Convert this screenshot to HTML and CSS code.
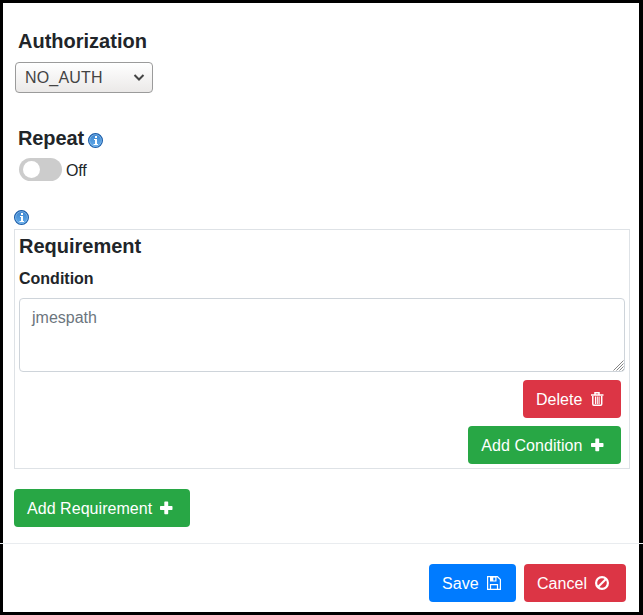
FILE: index.html
```html
<!DOCTYPE html>
<html lang="en">
<head>
<meta charset="utf-8">
<title>Request settings</title>
<link rel="stylesheet" href="styles.css">
</head>
<body>
<svg class="defs" aria-hidden="true">
  <defs>
    <linearGradient id="blue" x1="0" y1="0" x2="0" y2="1"><stop offset="0" stop-color="#3b82cc"/><stop offset="1" stop-color="#62adec"/></linearGradient>
    <symbol id="info" viewBox="0 0 15 15">
      <circle cx="7.500" cy="7.500" r="6.900" fill="url(#blue)" stroke="#1e5faa" stroke-width="1.200"/>
      <circle cx="7.500" cy="7.500" r="5.900" fill="none" stroke="#8fc0ec" stroke-width=".7"/>
      <path d="M7 3h2v2H7zM6 6h3v5h1v1H5.500v-1H7V7H6z" fill="#fff"/>
    </symbol>
    <symbol id="plus" viewBox="0 0 14 14"><path d="M6 .5h2.500q.7 0 .7.7V5h3.600q.7 0 .7.7v2.500q0 .7-.7.7H9.200v3.700q0 .7-.7.7H6q-.7 0-.7-.7V8.900H1.700Q1 8.900 1 8.200V5.700Q1 5 1.700 5h3.600V1.200Q5.300.5 6 .5z" fill="currentColor"/></symbol>
  </defs>
</svg>
<main class="dialog">
  <section class="content">
    <h2 class="title">Authorization</h2>
    <div class="select"><span>NO_AUTH</span><svg width="12" height="8" viewBox="0 0 12 8"><path d="M1.500 1 6 5.500 10.500 1" fill="none" stroke="#444" stroke-width="2"/></svg></div>
    <div class="repeat"><h2 class="title">Repeat</h2><svg class="info"><use href="#info"/></svg></div>
    <div class="toggle"><span class="track"><span class="knob"></span></span><span>Off</span></div>
    <svg class="info info-block"><use href="#info"/></svg>
    <section class="requirement">
      <h2 class="req-title">Requirement</h2>
      <label class="label" for="condition">Condition</label>
      <div class="field-wrap">
        <textarea id="condition" class="field" placeholder="jmespath"></textarea>
        <svg class="grip" viewBox="0 0 11 11"><path d="M.5 10.500l10-10M3.500 10.500l7-7M6.500 10.500l4-4M9.500 10.500l1-1" stroke="#777" stroke-width=".9"/></svg>
      </div>
      <div class="actions">
        <button class="btn danger delete"><span>Delete</span><svg class="icon" viewBox="0 0 14 14"><path d="M5 2.500V.8h4v1.700M1 3h12.500M2.800 4v8q0 1.200 1 1.200h6.900q1 0 1-1.200V4" fill="none" stroke="currentColor" stroke-width="1.500"/><path d="M5.500 4.500V12M7.300 4.500V12M9.100 4.500V12" stroke="currentColor" stroke-width="1.100"/></svg></button>
        <button class="btn success"><span>Add Condition</span><svg class="icon"><use href="#plus"/></svg></button>
      </div>
    </section>
    <button class="btn success add"><span>Add Requirement</span><svg class="icon"><use href="#plus"/></svg></button>
  </section>
  <footer class="footer">
    <button class="btn primary"><span>Save</span><svg class="icon" viewBox="0 0 14 14"><path d="M.6.6h9.800l3 3v9.800H.6zM3.500 13V8.600h7V13" fill="none" stroke="currentColor" stroke-width="1.200"/><path fill-rule="evenodd" d="M3 1h6.500v4.500H3zM6.300 1.500v3h2v-3z" fill="currentColor"/></svg></button>
    <button class="btn danger"><span>Cancel</span><svg class="icon" viewBox="0 0 14 14"><circle cx="7" cy="7" r="5.900" fill="none" stroke="currentColor" stroke-width="2.200"/><path d="m3 11 8-8" stroke="currentColor" stroke-width="2.200"/></svg></button>
  </footer>
</main>
</body>
</html>
```
FILE: styles.css
```css
* { box-sizing: border-box; }
body { margin: 0; background: #000; color: #212529; font: 16px/24px "Liberation Sans", Arial, sans-serif; }
.defs { display: block; width: 0; height: 0; }
.dialog {
  height: 615px;
  background: linear-gradient(#fff, #fff) 3px 3px / 636px 609px no-repeat;
}
.content { display: flex; flex-direction: column; align-items: flex-start; height: 543px; padding: 29px 13px 0 14px; }
.title, .req-title { margin: 0; font-size: 20px; line-height: 24px; font-weight: 700; }
.title { margin-left: 4px; }
.select {
  display: flex; align-items: center; justify-content: space-between;
  width: 138px; height: 31px; margin: 9px 0 0 1px; padding: 0 7px 0 9px;
  border: 1px solid #9b9b9b; border-radius: 4px;
  background: linear-gradient(#fff, #ebe9e8); color: #444;
}
.select span { letter-spacing: .17px; }
.repeat { display: flex; align-items: flex-start; height: 24px; margin-top: 33px; }
.repeat .title { letter-spacing: -.1px; }
.info { width: 15px; height: 15px; flex: none; }
.repeat .info { margin: 7px 0 0 4px; }
.toggle { display: flex; align-items: center; gap: 4px; height: 23px; margin: 8px 0 0 5px; }
.toggle > span:last-child { padding-top: 2px; letter-spacing: -.2px; }
.track { display: flex; align-items: center; width: 43px; height: 23px; padding-left: 4px; border-radius: 12px; background: #ccc; }
.knob { width: 17px; height: 17px; border-radius: 50%; background: #fff; }
.info-block { margin-top: 29px; }
.requirement { width: 616px; height: 240px; margin-top: 4px; padding: 4px; border: 1px solid #dee2e6; }
.label { display: block; margin-top: 9px; font-weight: 700; }
.field-wrap { position: relative; width: 606px; margin-top: 7px; }
.field {
  display: block; width: 606px; height: 74px; padding: 7px 12px 5px;
  border: 1px solid #ced4da; border-radius: 4px; outline: 0; resize: none;
  font: inherit; color: #495057; background: #fff;
}
.field::placeholder { color: #6c757d; opacity: 1; }
.grip { position: absolute; right: 1px; bottom: 1px; width: 11px; height: 11px; }
.actions { display: flex; flex-direction: column; align-items: flex-end; gap: 8px; margin: 8px 4px 0 0; }
.btn {
  display: flex; align-items: center; height: 38px; padding: 0 17px 0 13px;
  border: 0; border-radius: 4px; color: #fff; font: inherit; white-space: nowrap;
}
.btn span { padding-top: 2px; letter-spacing: .05px; }
.icon { width: 14px; height: 14px; margin-left: 7.500px; flex: none; }
.success { background: #28a745; }
.danger { background: #dc3545; }
.primary { background: #007bff; }
.add { width: 176px; margin-top: 20px; }
.add .icon { margin-left: 6.500px; }
.footer { display: flex; justify-content: flex-end; gap: 8px; height: 72px; padding: 20px 17px 0 0; border-top: 1px solid #e9ecef; }
.footer .btn { width: 87px; padding-right: 0; }
.footer .danger { width: 102px; }
.footer .icon { margin-left: 8px; }
```
